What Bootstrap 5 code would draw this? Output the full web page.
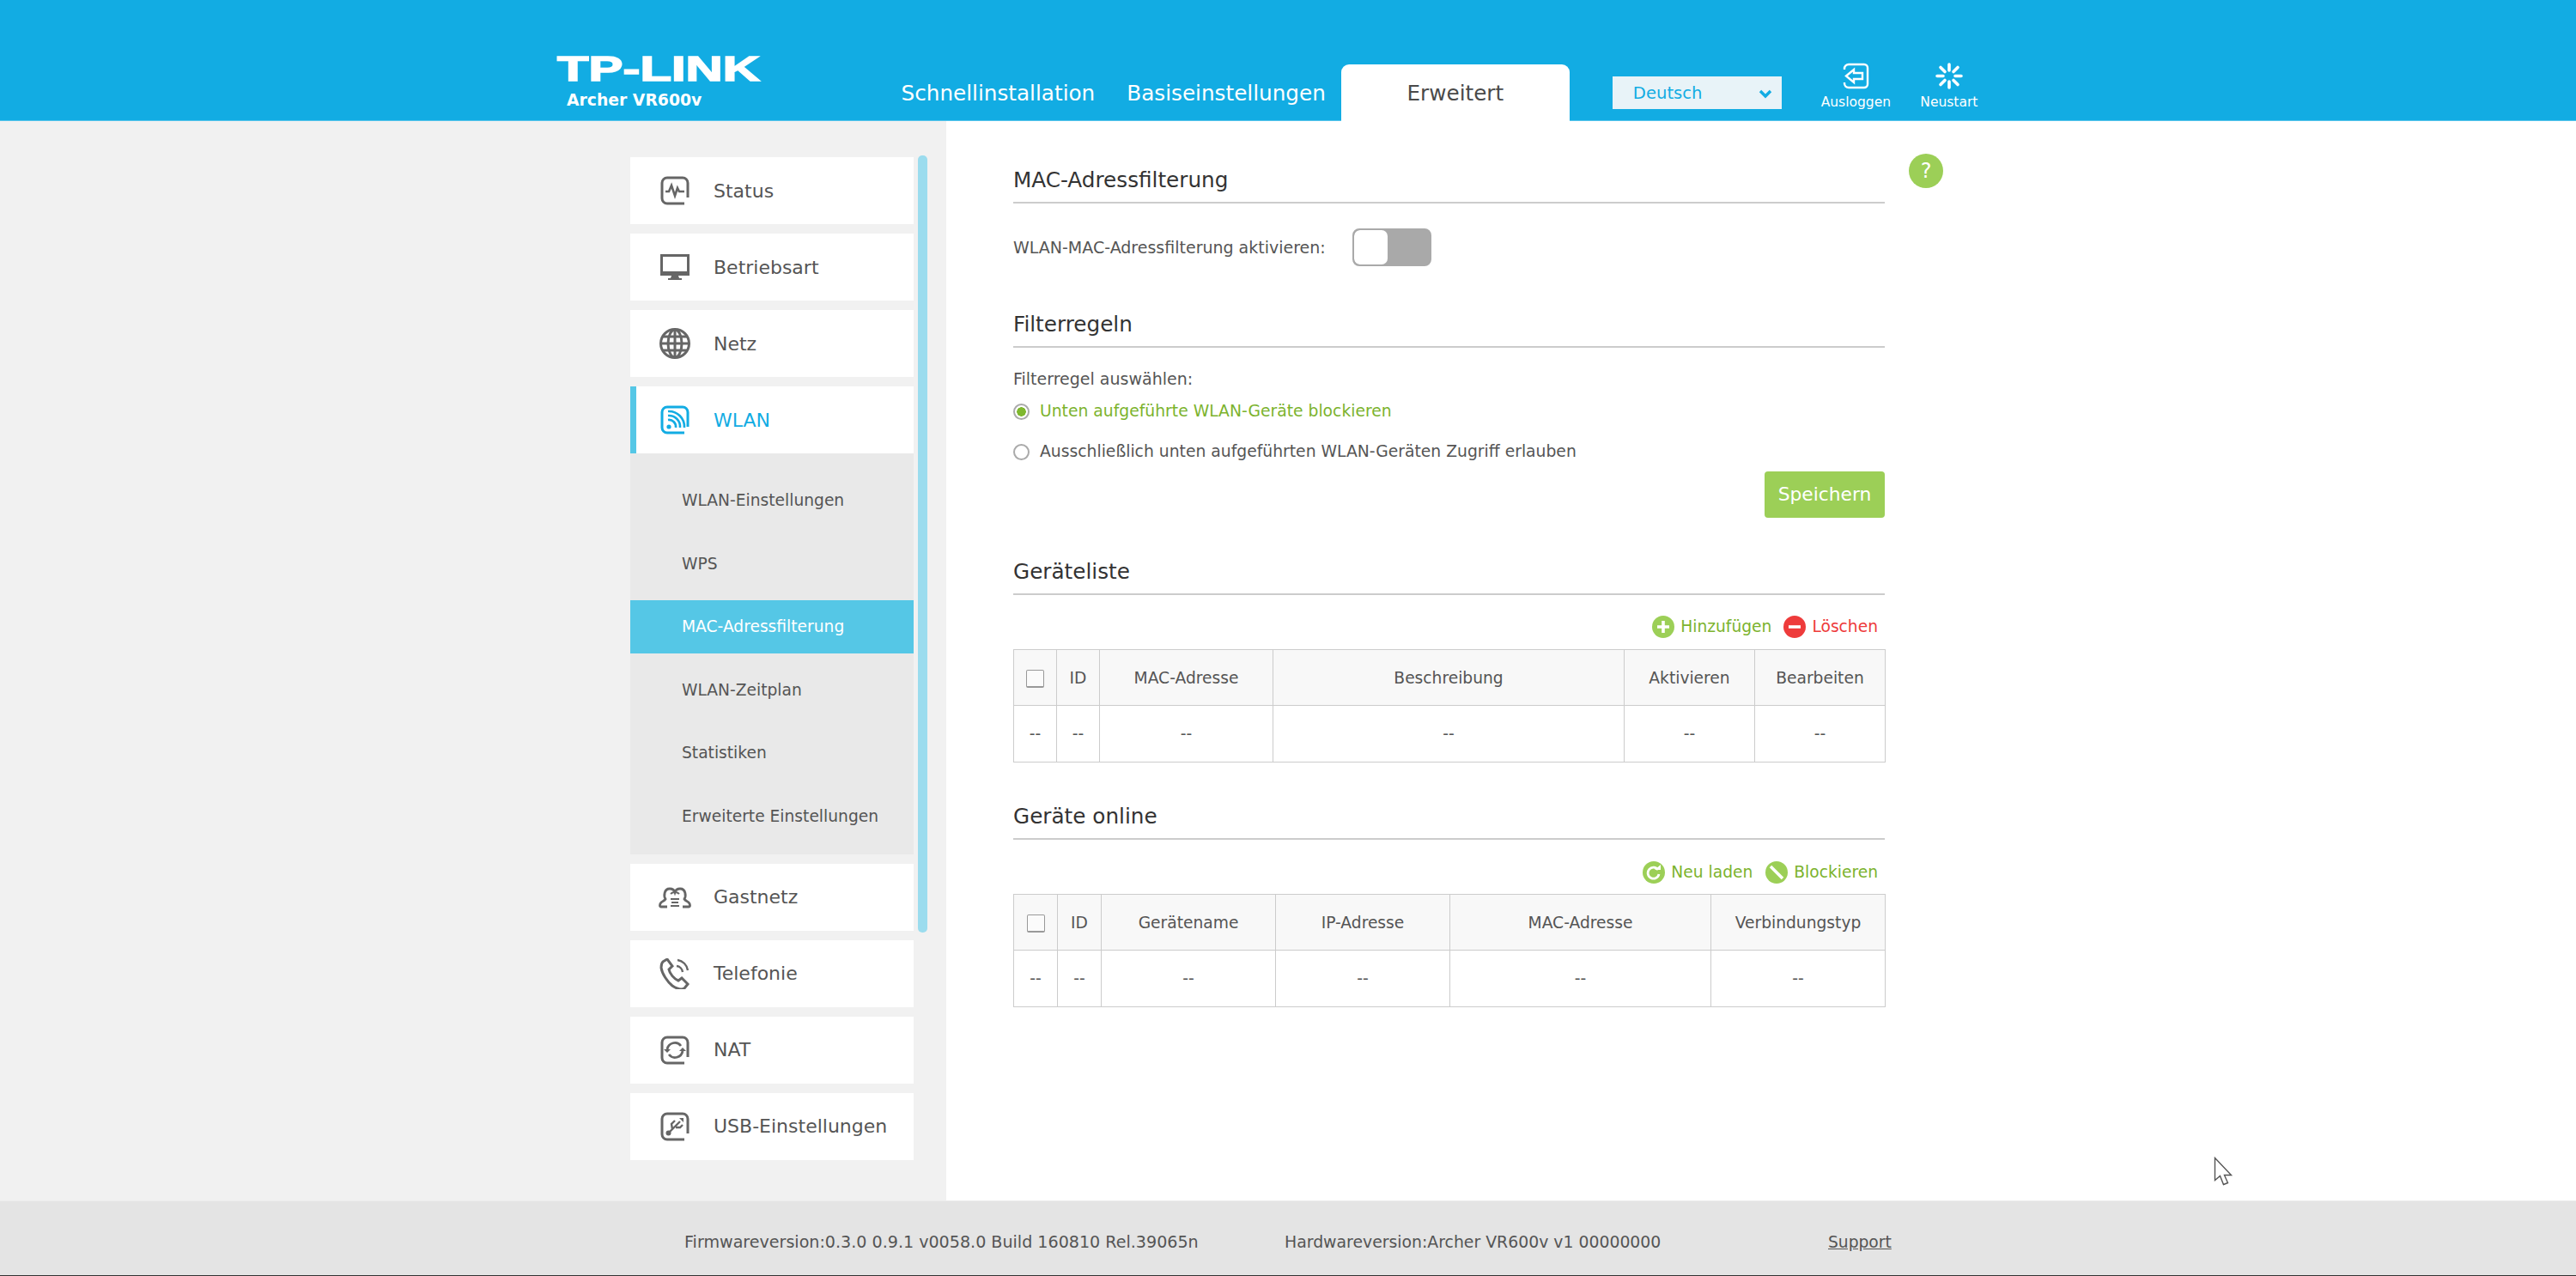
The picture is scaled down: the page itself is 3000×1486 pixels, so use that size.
<!DOCTYPE html>
<html lang="de">
<head>
  <meta charset="UTF-8" />
  <title>TP-LINK Archer VR600v</title>
  <link href="https://cdn.jsdelivr.net/npm/bootstrap@5.3.0/dist/css/bootstrap.min.css" rel="stylesheet" />
  <style>
    html, body { height: 1486px; overflow: hidden; }
    body { font-family: "DejaVu Sans", sans-serif; font-size: 18.67px; color: #555; background: #fff; position: relative; }

    /* header */
    .top-bar { height: 141px; background: #12ace3; border-bottom: 1px solid #55c4ea; padding-left: 648px; }
    .logo-box { width: 401.5px; flex: none; color: #fff; padding-top: 58px; }
    .logo-box svg { display: block; }
    .logo-model { font-weight: 700; font-size: 18.8px; line-height: 22px; margin: 0 0 0 12px; }
    .tab-link { font-size: 24.7px; line-height: 30px; color: #fff; text-decoration: none; padding-top: 94px; }
    .tab-basic { margin-left: 37px; margin-right: 18px; }
    .tab-active { width: 266px; height: 66px; margin-top: 75px; background: #fff; color: #4a4a4a; border-radius: 9px 9px 0 0; padding-top: 19px; text-align: center; }
    .lang-box { width: 197px; height: 38px; margin: 89px 0 0 50px; background: #e8f3f8; color: #12ace3; font-size: 19.6px; padding: 2px 11px 0 24px; }
    .top-action { width: 81px; margin-top: 73px; color: #fff; font-size: 15.5px; line-height: 20px; text-decoration: none; }
    .top-action svg { display: block; margin-bottom: 5px; }
    .act-out { margin-left: 46px; }
    .act-restart { margin-left: 34px; width: 68px; }

    /* sidebar */
    .page-body { height: 1257px; }
    .side-pane { width: 1102px; flex: none; background: #f1f1f1; padding: 42px 0 0 734px; position: relative; }
    .side-list { width: 330px; }
    .side-item { height: 78px; margin-bottom: 11px; background: #fff; color: #555; font-size: 22px; text-decoration: none; padding-left: 34px; }
    .side-item svg { flex: none; margin-right: 27px; }
    .side-open { margin-bottom: 0; color: #12ace3; border-left: 7px solid #55c7e6; padding-left: 27px; }
    .sub-list { background: #e9e9e9; padding: 24px 0 13px; margin-bottom: 11px; }
    .sub-item { display: flex; align-items: center; height: 62px; margin-bottom: 11.5px; padding-left: 60px; color: #555; text-decoration: none; }
    .sub-item:last-child { margin-bottom: 0; }
    .sub-active { background: #55c7e6; color: #fff; }
    .scroll-thumb { position: absolute; left: 1069px; top: 40px; width: 11px; height: 905px; background: #9bdcee; border-radius: 5px; }
    .side-item .guest-icon { margin-left: -1px; margin-right: 26px; }

    /* main */
    .main-pane { padding: 54px 0 0 78px; width: 1093px; flex: none; }
    .help-dot { width: 40px; height: 40px; margin: 38px 0 0 28px; border-radius: 50%; background: #9ccf57; color: #fff; font-size: 24px; line-height: 40px; text-align: center; flex: none; }
    .sec-title { font-size: 24.7px; line-height: 30px; color: #333; padding-bottom: 10px; border-bottom: 2px solid #ccc; margin: 0; font-weight: 400; }
    .row-line { line-height: 24px; }
    .text-wide { font-size: 19px; }
    .text-radio { font-size: 18.76px; }
    .gap-29 { margin-top: 29px; }
    .gap-53 { margin-top: 53px; }
    .gap-24 { margin-top: 24px; }
    .gap-23 { margin-top: 23px; }
    .gap-14 { margin-top: 14px; }
    .gap-48 { margin-top: 48px; }
    .gap-13 { margin-top: 13px; }
    .toggle-box { width: 92px; height: 44px; margin-left: 31px; border: 2px solid #a9a9a9; border-radius: 8px; background: #a9a9a9; overflow: hidden; }
    .toggle-knob { display: block; width: 39px; height: 40px; background: #fff; border-radius: 7px; }
    .form-check-input.tick { width: 19px; height: 19px; margin: 0 12px 0 0; border: 2px solid #aaa; background-color: #fff; }
    .form-check-input.tick:checked { background-image: radial-gradient(circle, #7fb82f 0 5px, transparent 5.5px); }
    .tick-on { color: #7cb32e; }
    .save-btn { width: 140px; height: 54px; margin-top: 11px; padding: 0; background: #9ccf57; border: 0; border-radius: 4px; color: #fff; font-size: 21.8px; }
    .tool-row { height: 26px; padding-right: 8px; }
    .tool-link { color: #7cb32e; text-decoration: none; line-height: 26px; padding-top: 1px; }
    .tool-link svg { margin-right: 7px; display: block; }
    .tool-red { color: #ee3b3b; margin-left: 14px; }
    .tool-next { margin-left: 15px; }
    .data-grid { table-layout: fixed; width: 100%; margin: 0; border-color: #ccc; --bs-table-color: #555; }
    .data-grid th, .data-grid td { padding: 0; text-align: center; vertical-align: middle; font-weight: 400; border: 1px solid #ccc; color: #555; }
    .data-grid th { height: 65px; padding-top: 2px; background: #f8f8f8; }
    .data-grid td { height: 66px; background: #fff; }
    .data-grid tr { border-width: 1px; }
    .check-box { display: inline-block; width: 21px; height: 21px; vertical-align: middle; border: 1px solid #999; border-bottom-width: 2px; border-radius: 2px; background: #fbfbfb; }

    /* footer */
    .bottom-bar { height: 88px; padding-top: 10px; background: #e4e4e4; border-bottom: 1px solid #333; border-top: 1px solid #ececec; position: relative; color: #555; }
    .foot-firm { margin-left: 797px; width: 699px; flex: none; font-size: 19.1px; }
    .foot-hard { width: 633px; flex: none; font-size: 18.85px; }
    .foot-link { color: #555; }

    .mouse-arrow { position: absolute; left: 2578px; top: 1347px; }
  </style>
</head>
<body>
  <header class="top-bar d-flex">
    <div class="logo-box">
      <svg width="242" height="48" viewBox="0 0 242 48"><text x="1" y="36" font-family="Liberation Sans" font-weight="700" font-size="40" fill="#fff" stroke="#fff" stroke-width="1.5" textLength="236" lengthAdjust="spacingAndGlyphs">TP-LINK</text></svg>
      <div class="logo-model">Archer VR600v</div>
    </div>
    <a class="tab-link" href="#">Schnellinstallation</a>
    <a class="tab-link tab-basic" href="#">Basiseinstellungen</a>
    <a class="tab-link tab-active" href="#">Erweitert</a>
    <div class="lang-box d-flex align-items-center justify-content-between">
      <span>Deutsch</span>
      <svg width="16" height="11" viewBox="0 0 16 11"><path d="M2 2l6 6 6-6" fill="none" stroke="#12ace3" stroke-width="3.4"/></svg>
    </div>
    <a class="top-action act-out d-flex flex-column align-items-center" href="#">
      <svg width="32" height="31" viewBox="0 0 32 31" fill="none" stroke="#fff" stroke-width="2.4"><path d="M3 8V7a5 5 0 0 1 5-5h18a4 4 0 0 1 4 4v19a4 4 0 0 1-4 4H8a5 5 0 0 1-5-5v-1"/><path d="M5 15.500l9-7.500v4h10v7H14v4z"/></svg>
      <span>Ausloggen</span>
    </a>
    <a class="top-action act-restart d-flex flex-column align-items-center" href="#">
      <svg width="32" height="31" viewBox="0 0 32 31" stroke="#fff" stroke-width="3.6" stroke-linecap="round"><path d="M16 2v7M16 22v7M2 15.500h7M23 15.500h7M6 5.500l5 5M21 20.500l5 5M26 5.500l-5 5M11 20.500l-5 5"/></svg>
      <span>Neustart</span>
    </a>
  </header>

  <div class="page-body d-flex">
    <aside class="side-pane">
      <nav class="side-list">
        <a class="side-item d-flex align-items-center" href="#">
          <svg width="36" height="36" viewBox="0 0 36 36" fill="none" stroke="#666" stroke-width="3"><path d="M33 26V9a6 6 0 0 0-6-6H9a6 6 0 0 0-6 6v18a6 6 0 0 0 6 6h20"/><path d="M7 19h4l3-7 4 12 3-9 2 4h6" stroke-width="2.600"/></svg>
          <span>Status</span>
        </a>
        <a class="side-item d-flex align-items-center" href="#">
          <svg width="36" height="32" viewBox="0 0 36 32"><path d="M1 1h34v25H1z" fill="#666"/><path d="M4 4h28v17H4z" fill="#fff"/><path d="M14 26h8l1 3h3v2H10v-2h3z" fill="#666"/></svg>
          <span>Betriebsart</span>
        </a>
        <a class="side-item d-flex align-items-center" href="#">
          <svg width="36" height="36" viewBox="0 0 36 36" fill="none" stroke="#666"><circle cx="18" cy="18" r="16.500" stroke-width="3"/><ellipse cx="18" cy="18" rx="8" ry="16" stroke-width="3"/><path d="M18 2v32M2 18h32M4 10h28M4 26h28" stroke-width="3"/></svg>
          <span>Netz</span>
        </a>
        <a class="side-item side-open d-flex align-items-center" href="#">
          <svg width="36" height="36" viewBox="0 0 36 36" fill="none" stroke="#12ace3" stroke-width="3"><path d="M33 26V9a6 6 0 0 0-6-6H9a6 6 0 0 0-6 6v18a6 6 0 0 0 6 6h20"/><circle cx="11" cy="26" r="2.600" fill="#12ace3" stroke="none"/><path d="M10 18a8 8 0 0 1 9 9M10 13a13 13 0 0 1 14 14M10 8a18 18 0 0 1 19 19" stroke-width="2.600"/></svg>
          <span>WLAN</span>
        </a>
        <div class="sub-list">
          <a class="sub-item" href="#">WLAN-Einstellungen</a>
          <a class="sub-item" href="#">WPS</a>
          <a class="sub-item sub-active" href="#">MAC-Adressfilterung</a>
          <a class="sub-item" href="#">WLAN-Zeitplan</a>
          <a class="sub-item" href="#">Statistiken</a>
          <a class="sub-item" href="#">Erweiterte Einstellungen</a>
        </div>
        <a class="side-item d-flex align-items-center" href="#">
          <svg class="guest-icon" width="38" height="26" viewBox="0 0 38 26" fill="none" stroke="#666" stroke-width="2.800"><path d="M10 24H3c-2 0-2-3 0-5 1-1 4-2 5-4-2-3-2-12 5-12 3 0 5 1 6 4 1-3 3-4 6-4 7 0 7 9 5 12 1 2 4 3 5 4 2 2 2 5 0 5h-7"/><path d="M14 9c1-1 3-2 5-2s4 1 5 2M14 15h10M15 19h8M14 23h10" stroke-width="2"/></svg>
          <span>Gastnetz</span>
        </a>
        <a class="side-item d-flex align-items-center" href="#">
          <svg width="36" height="36" viewBox="0 0 36 36" fill="none" stroke="#666" stroke-width="3"><path d="M4 4l5-3 6 8-4 4c1 5 6 11 11 13l4-3 7 7-4 5c-3 2-8 1-14-3C9 27 3 18 2 11c0-3 0-5 2-7z"/><path d="M20 9a8 8 0 0 1 7 7M21 2a14 14 0 0 1 12 12" stroke-width="2.400"/></svg>
          <span>Telefonie</span>
        </a>
        <a class="side-item d-flex align-items-center" href="#">
          <svg width="36" height="36" viewBox="0 0 36 36" fill="none" stroke="#666" stroke-width="3"><path d="M33 26V9a6 6 0 0 0-6-6H9a6 6 0 0 0-6 6v18a6 6 0 0 0 6 6h20"/><path d="M9 17a9 9 0 0 1 16-4M27 19a9 9 0 0 1-16 4" stroke-width="2.800"/><path d="M5 17h8l-4 4zM31 19h-8l4-4z" fill="#666" stroke="none"/></svg>
          <span>NAT</span>
        </a>
        <a class="side-item d-flex align-items-center" href="#">
          <svg width="36" height="36" viewBox="0 0 36 36" fill="none" stroke="#666" stroke-width="3"><path d="M33 26V9a6 6 0 0 0-6-6H9a6 6 0 0 0-6 6v18a6 6 0 0 0 6 6h20"/><circle cx="10.500" cy="25.500" r="3" fill="#666" stroke="none"/><path d="M11 25l13-13M15 21l-1-6 4-4M19 19l5 0 3-3" stroke-width="2.400"/><path d="M23 8l5 0 0 5z" fill="#666" stroke="none"/></svg>
          <span>USB-Einstellungen</span>
        </a>
      </nav>
      <div class="scroll-thumb"></div>
    </aside>

    <main class="main-pane">
      <h2 class="sec-title">MAC-Adressfilterung</h2>
      <div class="d-flex align-items-center gap-29">
        <span class="text-wide">WLAN-MAC-Adressfilterung aktivieren:</span>
        <span class="toggle-box"><span class="toggle-knob"></span></span>
      </div>

      <h2 class="sec-title gap-53">Filterregeln</h2>
      <div class="row-line gap-24 text-wide">Filterregel auswählen:</div>
      <label class="row-line gap-14 d-flex align-items-center tick-on text-radio"><input class="form-check-input tick" type="radio" name="rule" checked /> Unten aufgeführte WLAN-Geräte blockieren</label>
      <label class="row-line gap-23 d-flex align-items-center text-radio"><input class="form-check-input tick" type="radio" name="rule" /> Ausschließlich unten aufgeführten WLAN-Geräten Zugriff erlauben</label>
      <div class="text-end"><button class="btn save-btn" type="button">Speichern</button></div>

      <h2 class="sec-title gap-48">Geräteliste</h2>
      <div class="tool-row gap-23 d-flex justify-content-end">
        <a class="tool-link d-flex align-items-center" href="#">
          <svg width="26" height="26" viewBox="0 0 26 26"><circle cx="13" cy="13" r="13" fill="#9ccf57"/><path d="M13 6v14M6 13h14" stroke="#fff" stroke-width="3.600"/></svg>
          Hinzufügen
        </a>
        <a class="tool-link tool-red d-flex align-items-center" href="#">
          <svg width="26" height="26" viewBox="0 0 26 26"><circle cx="13" cy="13" r="13" fill="#ee3b3b"/><path d="M6 13h14" stroke="#fff" stroke-width="3.600"/></svg>
          Löschen
        </a>
      </div>
      <div class="gap-14">
        <table class="table data-grid">
          <colgroup><col width="50"><col width="50"><col width="202"><col width="409"><col width="152"><col width="152"></colgroup>
          <thead><tr><th><span class="check-box"></span></th><th>ID</th><th>MAC-Adresse</th><th>Beschreibung</th><th>Aktivieren</th><th>Bearbeiten</th></tr></thead>
          <tbody><tr><td>--</td><td>--</td><td>--</td><td>--</td><td>--</td><td>--</td></tr></tbody>
        </table>
      </div>

      <h2 class="sec-title gap-48">Geräte online</h2>
      <div class="tool-row gap-24 d-flex justify-content-end">
        <a class="tool-link d-flex align-items-center" href="#">
          <svg width="26" height="26" viewBox="0 0 26 26"><circle cx="13" cy="13" r="13" fill="#9ccf57"/><path d="M18 10a6.500 6.500 0 1 0 1 5" fill="none" stroke="#fff" stroke-width="2.800"/><path d="M14 10h7V4z" fill="#fff"/></svg>
          Neu laden
        </a>
        <a class="tool-link tool-next d-flex align-items-center" href="#">
          <svg width="26" height="26" viewBox="0 0 26 26"><circle cx="13" cy="13" r="13" fill="#9ccf57"/><path d="M6 6l14 14" stroke="#fff" stroke-width="3.600"/></svg>
          Blockieren
        </a>
      </div>
      <div class="gap-13">
        <table class="table data-grid">
          <colgroup><col width="51"><col width="51"><col width="203"><col width="203"><col width="304"><col width="203"></colgroup>
          <thead><tr><th><span class="check-box"></span></th><th>ID</th><th>Gerätename</th><th>IP-Adresse</th><th>MAC-Adresse</th><th>Verbindungstyp</th></tr></thead>
          <tbody><tr><td>--</td><td>--</td><td>--</td><td>--</td><td>--</td><td>--</td></tr></tbody>
        </table>
      </div>
    </main>

    <a class="help-dot text-decoration-none" href="#">?</a>
  </div>

  <footer class="bottom-bar d-flex align-items-center">
    <span class="foot-firm">Firmwareversion:0.3.0 0.9.1 v0058.0 Build 160810 Rel.39065n</span>
    <span class="foot-hard">Hardwareversion:Archer VR600v v1 00000000</span>
    <a class="foot-link" href="#">Support</a>
  </footer>

  <svg class="mouse-arrow" width="24" height="34" viewBox="0 0 24 34"><path d="M1.500 1.500v26l6-5 4 10 5-2-4-9h8z" fill="#fff" stroke="#555" stroke-width="1.400"/></svg>

  <script src="https://cdn.jsdelivr.net/npm/bootstrap@5.3.0/dist/js/bootstrap.bundle.min.js"></script>
</body>
</html>
